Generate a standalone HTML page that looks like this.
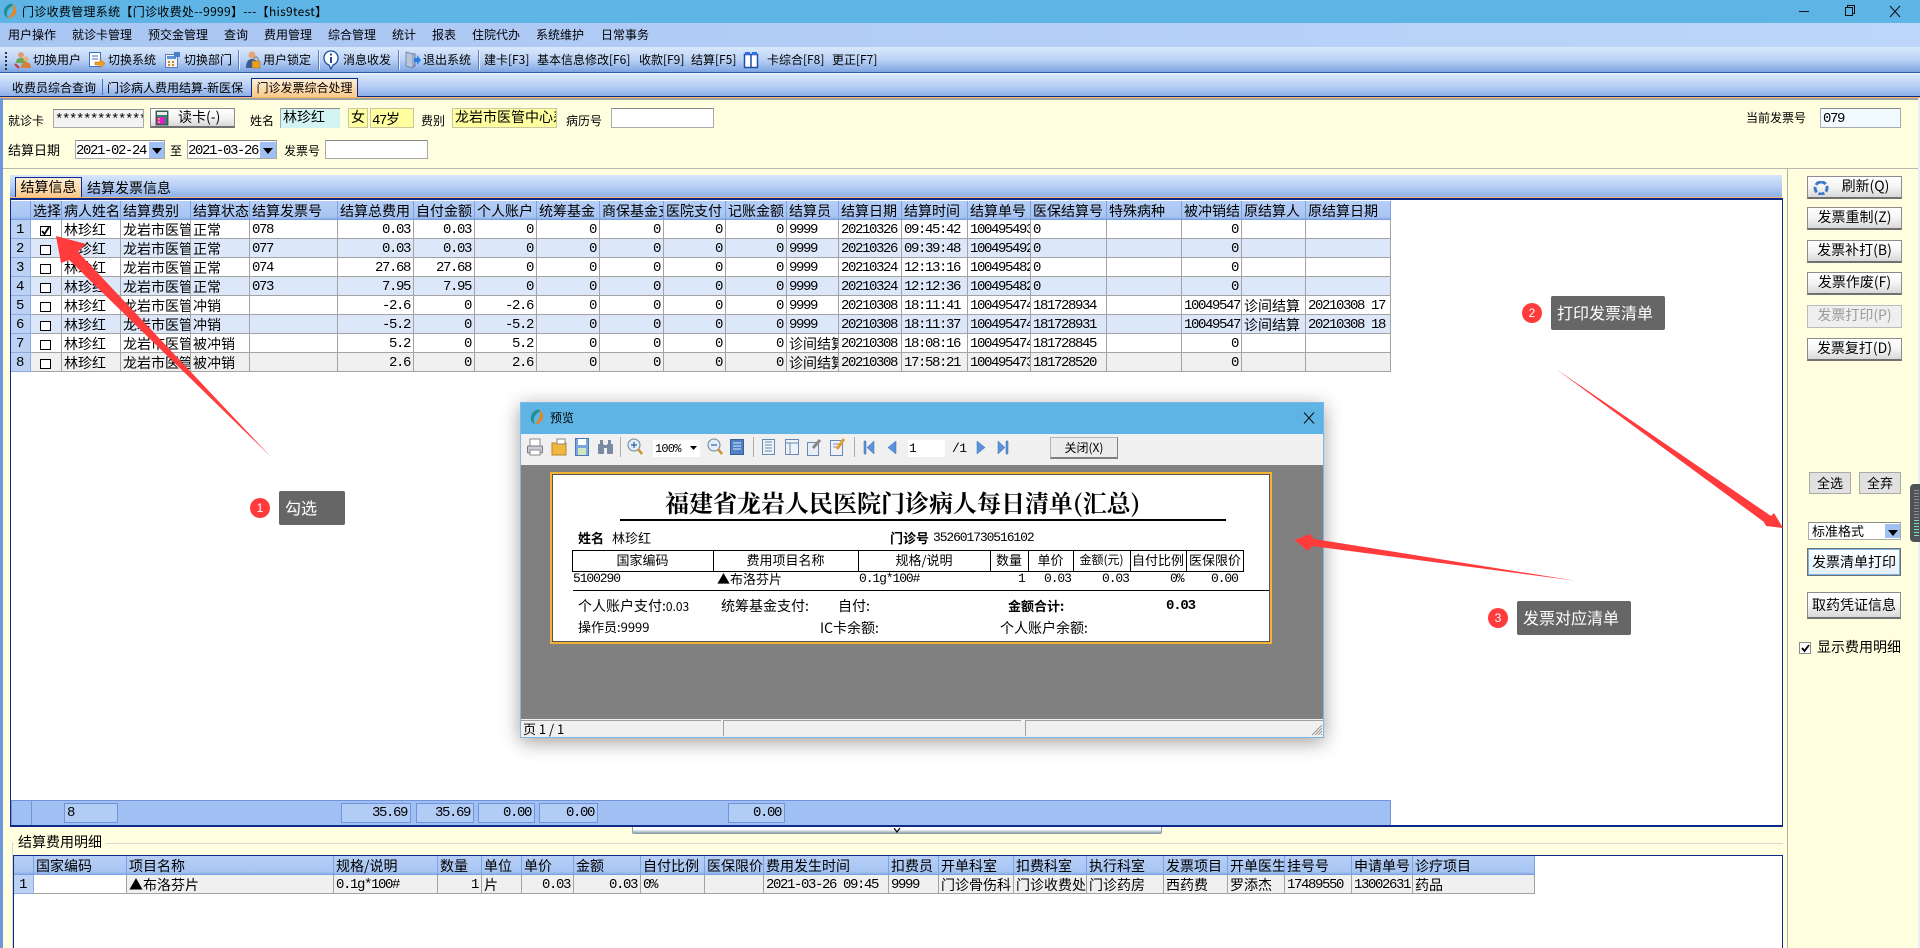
<!DOCTYPE html>
<html lang="zh"><head><meta charset="utf-8"><title>门诊收费管理系统</title>
<style>
*{box-sizing:border-box}
html,body{margin:0;padding:0;width:1920px;height:948px;overflow:hidden;background:#ffffe0}
body{position:relative;font:12px/16px "WenQuanYi Zen Hei","Noto Sans CJK SC","Liberation Sans",sans-serif;color:#000}
.a{position:absolute}
.t{position:absolute;white-space:nowrap;line-height:16px}
.f14{font-size:14px}
.mono{font-family:"Liberation Mono","WenQuanYi Zen Hei",monospace;font-size:14px;letter-spacing:-1.4px}
.rm{font-family:"Liberation Mono",monospace;font-size:13px;letter-spacing:-1.1px}
.inp{position:absolute;border:1px solid #a9a9a9;border-top-color:#8a8a8a;background:#fff;overflow:hidden;white-space:nowrap;font-size:14px;line-height:17px;padding-left:2px}
.inp.mono{line-height:20px}
.btn{position:absolute;background:linear-gradient(#fff,#f4f4f4 50%,#d8d8d8);border:1px solid #8c8c8c;border-bottom:2px solid #707070;font-size:14px;line-height:19px;text-align:center;white-space:nowrap}
.arr{position:absolute;background:#a0bff3}
.arr:after{content:"";position:absolute;left:3px;top:6px;border:5px solid transparent;border-top:6px solid #000}
table{position:absolute;border-collapse:separate;border-spacing:0;table-layout:fixed}
td,th{box-sizing:border-box;height:19px;padding:2px 0 0 2px;border-right:1px solid #a3a3a3;border-bottom:1px solid #a3a3a3;overflow:hidden;white-space:nowrap;font-weight:normal;text-align:left;font-size:14px;line-height:16px}
th{background:linear-gradient(#b6cff6,#a8c5f2 85%,#8fb0ea);border-right:1px solid #7fa2e0;border-bottom:1px solid #7b9fe0}
td.i{background:#bcd2f5;border-right-color:#8fabe0;border-bottom-color:#8fabe0;font-family:"Liberation Mono",monospace;font-size:14px;letter-spacing:-1.4px;padding-left:5px}
td.m,td.r{font-family:"Liberation Mono",monospace;letter-spacing:-1.4px}
td.r{text-align:right;padding:2px 3px 0 0}
tr.e td{background:#dce8fa}
tr.e td.i,tr.g td.i{background:#bcd2f5}
tr.g td{background:#f0f0f0}
.c{display:block;width:11px;height:10px;border:1px solid #000;background:#fff;margin:1px 0 0 7px;position:relative}
.c svg{position:absolute;left:0;top:-1px}
.sm{position:absolute;border:1px solid #7292d9;background:#b2cdf5;height:20px;top:803px;font-family:"Liberation Mono",monospace;font-size:14px;letter-spacing:-1.4px;line-height:18px;text-align:right;padding-right:3px}
.b{font-weight:bold}
</style></head><body>

<!-- title bar -->
<div class="a" style="left:0;top:0;width:1920px;height:23px;background:#5db4e5"></div>
<svg class="a" style="left:2px;top:3px" width="16" height="16" viewBox="0 0 16 16"><path d="M10 .5C5 1 1.500 5 2 10c.2 2 1.500 4 4 5.500C3.500 11 5 5 11 2.500z" fill="#1f8f8f"/><path d="M5.500 15.500C11 15 15 11 14 6c-.4-2-1.500-4-3.500-5 2 4.500 0 10-5 14.500z" fill="#e9851c"/></svg>
<div class="t" style="left:22px;top:4px;letter-spacing:.3px">门诊收费管理系统【门诊收费处--9999】---【his9test】</div>
<svg class="a" style="left:1795px;top:3px" width="120" height="16" viewBox="0 0 120 16" fill="none" stroke="#111"><path d="M4 8.500h10"/><path d="M50.500 4.500h7v8h-7zM52.500 4.500v-2h7v8h-2"/><path d="M95 3l10 11M105 3L95 14"/></svg>

<!-- menu -->
<div class="a" style="left:0;top:23px;width:1920px;height:24px;background:linear-gradient(90deg,#a9c5f2,#bdd6fa)"></div>
<div class="t" style="left:8px;top:27px">用户操作</div>
<div class="t" style="left:72px;top:27px">就诊卡管理</div>
<div class="t" style="left:148px;top:27px">预交金管理</div>
<div class="t" style="left:224px;top:27px">查询</div>
<div class="t" style="left:264px;top:27px">费用管理</div>
<div class="t" style="left:328px;top:27px">综合管理</div>
<div class="t" style="left:392px;top:27px">统计</div>
<div class="t" style="left:432px;top:27px">报表</div>
<div class="t" style="left:472px;top:27px">住院代办</div>
<div class="t" style="left:536px;top:27px">系统维护</div>
<div class="t" style="left:601px;top:27px">日常事务</div>

<!-- toolbar -->
<div class="a" style="left:0;top:47px;width:1920px;height:26px;background:linear-gradient(#d9e9fc,#bcd3f6 50%,#7fa5e2);border-bottom:1px solid #2f5fa8"></div>
<div class="a" style="left:5px;top:52px;width:2px;height:18px;background:repeating-linear-gradient(#234 0 2px,transparent 2px 4px)"></div>
<svg class="a" style="left:14px;top:50px" width="18" height="20" viewBox="0 0 18 20"><circle cx="7" cy="5" r="3" fill="#e0a070"/><path d="M2 13c0-4 2-5 5-5s5 1 5 5z" fill="#6aa84f"/><circle cx="12" cy="9" r="2.500" fill="#e9b27a"/><path d="M7 18c0-4 2-6 5-6s5 2 5 6z" fill="#d6803c"/><path d="M1 14l4 4" stroke="#c33" stroke-width="2"/></svg>
<div class="t" style="left:33px;top:52px">切换用户</div>
<svg class="a" style="left:88px;top:51px" width="18" height="18" viewBox="0 0 18 18"><rect x="1.500" y="1.500" width="11" height="14" fill="#fff" stroke="#3b6fc0"/><path d="M4 5h6M4 8h6" stroke="#3b6fc0"/><path d="M7 11h5V8l5 4.500L12 17v-3H7z" fill="#f0a020" stroke="#b06a10" stroke-width=".5"/></svg>
<div class="t" style="left:108px;top:52px">切换系统</div>
<svg class="a" style="left:164px;top:51px" width="17" height="18" viewBox="0 0 17 18"><rect x="1.500" y="3.500" width="12" height="13" fill="#f4f4f4" stroke="#5a7fb8"/><rect x="3" y="5" width="9" height="3" fill="#5f95d8"/><path d="M4 10h2v2H4zM8 10h2v2H8zM4 13h2v2H4zM8 13h2v2H8z" fill="#d9822b"/><rect x="10" y="1" width="6" height="5" fill="#4a7fcc"/></svg>
<div class="t" style="left:184px;top:52px">切换部门</div>
<div class="a" style="left:238px;top:50px;width:1px;height:20px;background:#5d7fb8;box-shadow:1px 0 #e6f0fc"></div>
<svg class="a" style="left:245px;top:50px" width="16" height="20" viewBox="0 0 16 20"><circle cx="7" cy="5" r="3.500" fill="#e4a878"/><path d="M1 18c0-6 2-9 6-9s6 3 6 9z" fill="#3a5b94"/><rect x="7" y="11" width="8" height="7" fill="#e8a020" stroke="#96650f" stroke-width=".5"/><path d="M9 11V9a2 2 0 014 0v2" fill="none" stroke="#777"/></svg>
<div class="t" style="left:263px;top:52px">用户锁定</div>
<div class="a" style="left:318px;top:50px;width:1px;height:20px;background:#5d7fb8;box-shadow:1px 0 #e6f0fc"></div>
<svg class="a" style="left:323px;top:50px" width="16" height="20" viewBox="0 0 16 20"><path d="M8 1c4 0 7 3 7 7s-3 6.500-5 7l-2 4-2-4c-2-.5-5-3-5-7s3-7 7-7z" fill="#fff" stroke="#1f4f9c" stroke-width="1.300"/><rect x="7" y="3.500" width="2" height="2" fill="#1f4f9c"/><rect x="7" y="7" width="2" height="6" fill="#1f4f9c"/></svg>
<div class="t" style="left:343px;top:52px">消息收发</div>
<div class="a" style="left:398px;top:50px;width:1px;height:20px;background:#5d7fb8;box-shadow:1px 0 #e6f0fc"></div>
<svg class="a" style="left:404px;top:50px" width="17" height="20" viewBox="0 0 17 20"><path d="M2 2l7 2v14l-7-2z" fill="#b8c6dc" stroke="#5e7299" stroke-width=".7"/><path d="M9 4h2v12H9" fill="none" stroke="#5e7299"/><path d="M10 8h3V5l4 5-4 5v-3h-3z" fill="#2c7fe0"/></svg>
<div class="t" style="left:423px;top:52px">退出系统</div>
<div class="a" style="left:478px;top:50px;width:1px;height:20px;background:#5d7fb8;box-shadow:1px 0 #e6f0fc"></div>
<div class="t" style="left:484px;top:52px">建卡[F3]</div>
<div class="t" style="left:537px;top:52px">基本信息修改[F6]</div>
<div class="t" style="left:639px;top:52px">收款[F9]</div>
<div class="t" style="left:691px;top:52px">结算[F5]</div>
<svg class="a" style="left:743px;top:51px" width="16" height="18" viewBox="0 0 16 18"><rect x="1.500" y="3.500" width="13" height="13" fill="#fff" stroke="#1c4fb0" stroke-width="1.500"/><path d="M8 3v14" stroke="#1c4fb0" stroke-width="1.500"/><rect x="2" y="1" width="5" height="3" fill="#2f6fe0"/><rect x="9" y="1" width="5" height="3" fill="#2f6fe0"/></svg>
<div class="t" style="left:767px;top:52px">卡综合[F8]</div>
<div class="t" style="left:832px;top:52px">更正[F7]</div>

<!-- tab bar -->
<div class="a" style="left:0;top:73px;width:1920px;height:2px;background:#e6effb"></div>
<div class="a" style="left:0;top:75px;width:1920px;height:21px;background:linear-gradient(#d6e6fb,#b9d0f5 50%,#8eb0e8)"></div>
<div class="a" style="left:0;top:96px;width:1920px;height:1px;background:#0d2a8a"></div>
<div class="a" style="left:0;top:97px;width:1920px;height:1px;background:#fdb868"></div>
<div class="t" style="left:12px;top:80px">收费员综合查询</div>
<div class="a" style="left:102px;top:79px;width:1px;height:16px;background:#4a6fae"></div>
<div class="t" style="left:107px;top:80px">门诊病人费用结算-新医保</div>
<div class="a" style="left:251px;top:78px;width:107px;height:19px;background:linear-gradient(#fdeed6,#fbc98a);border:1px solid #0d2a8a;border-bottom:0;text-align:center;line-height:18px">门诊发票综合处理</div>

<!-- form panel -->
<div class="a" style="left:0;top:98px;width:3px;height:850px;background:#6f97dc"></div>
<div class="a" style="left:3px;top:98px;width:1915px;height:2px;background:#a0a0a0"></div>
<div class="a" style="left:3px;top:168px;width:1915px;height:1px;background:#b8b8b0"></div>
<div class="a" style="left:1918px;top:98px;width:2px;height:850px;background:#e8eef8"></div>

<div class="t" style="left:8px;top:113px">就诊卡</div>
<div class="inp mono" style="left:53px;top:109px;width:91px;height:19px;background:#f2f2f2;padding-left:1px;line-height:21px">*************</div>
<div class="btn" style="left:150px;top:108px;width:85px;height:20px;line-height:17px;text-align:left;padding-left:27px">读卡(-)</div>
<svg class="a" style="left:155px;top:110px" width="14" height="16" viewBox="0 0 14 16"><rect x="1" y="1" width="12" height="14" fill="#2b8a6a" stroke="#222" stroke-width=".7"/><rect x="2" y="2" width="10" height="3" fill="#eee"/><rect x="2" y="7" width="8" height="7" fill="#e020c0"/><path d="M3 9h2M3 12h2" stroke="#ff0"/></svg>
<div class="t" style="left:250px;top:113px">姓名</div>
<div class="inp" style="left:280px;top:108px;width:60px;height:20px;background:#d4f4f4;border-width:1px 0 0 1px">林珍红</div>
<div class="inp" style="left:348px;top:108px;width:20px;height:20px;background:#ffffa0;border-color:#c8c8a0">女</div>
<div class="inp mono" style="left:370px;top:108px;width:44px;height:20px;background:#ffffa0;border-color:#c8c8a0;padding-left:1px">47<span style="font-family:'WenQuanYi Zen Hei',sans-serif;letter-spacing:0">岁</span></div>
<div class="t" style="left:421px;top:113px">费别</div>
<div class="inp" style="left:452px;top:108px;width:105px;height:20px;background:#ffffa0;border-color:#c8c8a0">龙岩市医管中心差额</div>
<div class="t" style="left:566px;top:113px">病历号</div>
<div class="inp" style="left:611px;top:108px;width:103px;height:20px"></div>
<div class="t" style="left:1746px;top:110px">当前发票号</div>
<div class="inp mono" style="left:1820px;top:108px;width:81px;height:20px;background:#f0faff">079</div>

<div class="t" style="left:8px;top:142px;font-size:13px">结算日期</div>
<div class="inp mono" style="left:75px;top:140px;width:90px;height:19px;padding-left:0">2021-02-24</div>
<div class="arr" style="left:149px;top:142px;width:15px;height:16px"></div>
<div class="t" style="left:170px;top:143px">至</div>
<div class="inp mono" style="left:187px;top:140px;width:90px;height:19px;padding-left:0">2021-03-26</div>
<div class="arr" style="left:260px;top:142px;width:16px;height:16px"></div>
<div class="t" style="left:284px;top:143px">发票号</div>
<div class="inp" style="left:325px;top:140px;width:103px;height:19px"></div>

<!-- inner tabs -->
<div class="a" style="left:10px;top:175px;width:1772px;height:22px;background:linear-gradient(#d6e6fb,#b9d0f5 50%,#8eb0e8)"></div>
<div class="a" style="left:15px;top:177px;width:67px;height:20px;background:linear-gradient(#fdeed6,#fbc98a);border:1px solid #0d2a8a;border-bottom:0;text-align:center;font-size:14px;line-height:18px">结算信息</div>
<div class="t f14" style="left:87px;top:180px">结算发票信息</div>
<div class="a" style="left:10px;top:197px;width:1772px;height:1px;background:#fdb868"></div>

<!-- main grid -->
<div class="a" style="left:10px;top:198px;width:1773px;height:629px;background:#fff;border:1px solid #0d2a8a;border-width:2px 1px"></div>
<table style="left:11px;top:201px;width:1380px">
<colgroup><col width="20"><col width="31"><col width="59"><col width="70"><col width="59"><col width="88"><col width="76"><col width="61"><col width="62"><col width="63"><col width="64"><col width="62"><col width="61"><col width="52"><col width="63"><col width="66"><col width="63"><col width="76"><col width="75"><col width="60"><col width="64"><col width="85"></colgroup>
<tr><th></th><th>选择</th><th>病人姓名</th><th>结算费别</th><th>结算状态</th><th>结算发票号</th><th>结算总费用</th><th>自付金额</th><th>个人账户</th><th>统筹基金</th><th>商保基金支付</th><th>医院支付</th><th>记账金额</th><th>结算员</th><th>结算日期</th><th>结算时间</th><th>结算单号</th><th>医保结算号</th><th>特殊病种</th><th>被冲销结</th><th>原结算人</th><th>原结算日期</th></tr>
<tr><td class="i">1</td><td><i class="c"><svg width="9" height="10" viewBox="0 0 9 10"><path d="M1 5l2.500 3L8 1" fill="none" stroke="#000" stroke-width="1.800"/></svg></i></td><td>林珍红</td><td>龙岩市医管中心差额</td><td>正常</td><td class="m">078</td><td class="r">0.03</td><td class="r">0.03</td><td class="r">0</td><td class="r">0</td><td class="r">0</td><td class="r">0</td><td class="r">0</td><td class="m">9999</td><td class="m">20210326</td><td class="m">09:45:42</td><td class="m">1004954932</td><td class="m">0</td><td></td><td class="r">0</td><td></td><td></td></tr>
<tr class="e"><td class="i">2</td><td><i class="c"></i></td><td>林珍红</td><td>龙岩市医管中心差额</td><td>正常</td><td class="m">077</td><td class="r">0.03</td><td class="r">0.03</td><td class="r">0</td><td class="r">0</td><td class="r">0</td><td class="r">0</td><td class="r">0</td><td class="m">9999</td><td class="m">20210326</td><td class="m">09:39:48</td><td class="m">1004954925</td><td class="m">0</td><td></td><td class="r">0</td><td></td><td></td></tr>
<tr><td class="i">3</td><td><i class="c"></i></td><td>林珍红</td><td>龙岩市医管中心差额</td><td>正常</td><td class="m">074</td><td class="r">27.68</td><td class="r">27.68</td><td class="r">0</td><td class="r">0</td><td class="r">0</td><td class="r">0</td><td class="r">0</td><td class="m">9999</td><td class="m">20210324</td><td class="m">12:13:16</td><td class="m">1004954825</td><td class="m">0</td><td></td><td class="r">0</td><td></td><td></td></tr>
<tr class="e"><td class="i">4</td><td><i class="c"></i></td><td>林珍红</td><td>龙岩市医管中心差额</td><td>正常</td><td class="m">073</td><td class="r">7.95</td><td class="r">7.95</td><td class="r">0</td><td class="r">0</td><td class="r">0</td><td class="r">0</td><td class="r">0</td><td class="m">9999</td><td class="m">20210324</td><td class="m">12:12:36</td><td class="m">1004954824</td><td class="m">0</td><td></td><td class="r">0</td><td></td><td></td></tr>
<tr><td class="i">5</td><td><i class="c"></i></td><td>林珍红</td><td>龙岩市医管中心差额</td><td>冲销</td><td></td><td class="r">-2.6</td><td class="r">0</td><td class="r">-2.6</td><td class="r">0</td><td class="r">0</td><td class="r">0</td><td class="r">0</td><td class="m">9999</td><td class="m">20210308</td><td class="m">18:11:41</td><td class="m">1004954741</td><td class="m">181728934</td><td></td><td class="m">10049547</td><td>诊间结算</td><td class="m">20210308 17</td></tr>
<tr class="e"><td class="i">6</td><td><i class="c"></i></td><td>林珍红</td><td>龙岩市医管中心差额</td><td>冲销</td><td></td><td class="r">-5.2</td><td class="r">0</td><td class="r">-5.2</td><td class="r">0</td><td class="r">0</td><td class="r">0</td><td class="r">0</td><td class="m">9999</td><td class="m">20210308</td><td class="m">18:11:37</td><td class="m">1004954740</td><td class="m">181728931</td><td></td><td class="m">10049547</td><td>诊间结算</td><td class="m">20210308 18</td></tr>
<tr><td class="i">7</td><td><i class="c"></i></td><td>林珍红</td><td>龙岩市医管中心差额</td><td>被冲销</td><td></td><td class="r">5.2</td><td class="r">0</td><td class="r">5.2</td><td class="r">0</td><td class="r">0</td><td class="r">0</td><td class="r">0</td><td>诊间结算</td><td class="m">20210308</td><td class="m">18:08:16</td><td class="m">1004954742</td><td class="m">181728845</td><td></td><td class="r">0</td><td></td><td></td></tr>
<tr class="g"><td class="i">8</td><td><i class="c"></i></td><td>林珍红</td><td>龙岩市医管中心差额</td><td>被冲销</td><td></td><td class="r">2.6</td><td class="r">0</td><td class="r">2.6</td><td class="r">0</td><td class="r">0</td><td class="r">0</td><td class="r">0</td><td>诊间结算</td><td class="m">20210308</td><td class="m">17:58:21</td><td class="m">1004954739</td><td class="m">181728520</td><td></td><td class="r">0</td><td></td><td></td></tr>
</table>
<!-- grid footer -->
<div class="a" style="left:11px;top:800px;width:1380px;height:25px;background:#a0bff3;border:1px solid #7292d9;border-bottom:0"></div>
<div class="a" style="left:31px;top:800px;width:1px;height:25px;background:#7292d9"></div>
<div class="sm" style="left:64px;width:54px;text-align:left;padding-left:2px">8</div>
<div class="sm" style="left:341px;width:70px">35.69</div>
<div class="sm" style="left:416px;width:58px">35.69</div>
<div class="sm" style="left:478px;width:57px">0.00</div>
<div class="sm" style="left:539px;width:59px">0.00</div>
<div class="sm" style="left:728px;width:57px">0.00</div>

<!-- splitter -->
<div class="a" style="left:632px;top:827px;width:530px;height:7px;background:linear-gradient(#fff 40%,#8fa6b4);border:1px solid #8c9eaa;border-top:0;border-radius:0 0 2px 2px"></div>
<svg class="a" style="left:893px;top:828px" width="8" height="5" viewBox="0 0 8 5"><path d="M1 0l3 4 3-4" fill="none" stroke="#000" stroke-width="1.200"/></svg>

<!-- detail -->
<div class="a" style="left:12px;top:843px;width:1771px;height:1px;background:#d8d8d0"></div>
<div class="a" style="left:12px;top:843px;width:1px;height:105px;background:#d8d8d0"></div>
<div class="t f14" style="left:14px;top:834px;background:#ffffe0;padding:0 4px">结算费用明细</div>
<div class="a" style="left:13px;top:855px;width:1770px;height:93px;background:#fff;border:1px solid #0d2a8a;border-bottom:0"></div>
<table style="left:14px;top:856px;width:1521px">
<colgroup><col width="20"><col width="93"><col width="207"><col width="104"><col width="44"><col width="40"><col width="52"><col width="67"><col width="64"><col width="59"><col width="125"><col width="50"><col width="75"><col width="73"><col width="77"><col width="64"><col width="57"><col width="67"><col width="61"><col width="122"></colgroup>
<tr><th></th><th>国家编码</th><th>项目名称</th><th>规格/说明</th><th>数量</th><th>单位</th><th>单价</th><th>金额</th><th>自付比例</th><th>医保限价</th><th>费用发生时间</th><th>扣费员</th><th>开单科室</th><th>扣费科室</th><th>执行科室</th><th>发票项目</th><th>开单医生</th><th>挂号号</th><th>申请单号</th><th>诊疗项目</th></tr>
<tr class="g"><td class="i">1</td><td style="background:#fff"></td><td>▲布洛芬片</td><td class="m">0.1g*100#</td><td class="r">1</td><td>片</td><td class="r">0.03</td><td class="r">0.03</td><td class="m">0%</td><td></td><td class="m">2021-03-26 09:45</td><td class="m">9999</td><td>门诊骨伤科</td><td>门诊收费处</td><td>门诊药房</td><td>西药费</td><td>罗添杰</td><td class="m">17489550</td><td class="m">13002631</td><td>药品</td></tr>
</table>

<!-- right panel -->
<div class="a" style="left:1787px;top:169px;width:1px;height:779px;background:#b0b0a8"></div>
<div class="btn" style="left:1807px;top:176px;width:95px;height:23px;padding-left:22px">刷新(Q)</div>
<svg class="a" style="left:1813px;top:181px" width="16" height="14" viewBox="0 0 16 14"><path d="M8 1a6 6 0 10.100 0" fill="none" stroke="#3f78c8" stroke-width="3" stroke-dasharray="6 2"/></svg>
<div class="btn" style="left:1807px;top:207px;width:95px;height:23px">发票重制(Z)</div>
<div class="btn" style="left:1807px;top:240px;width:95px;height:23px">发票补打(B)</div>
<div class="btn" style="left:1807px;top:272px;width:95px;height:23px">发票作废(F)</div>
<div class="btn" style="left:1807px;top:305px;width:95px;height:23px;border:1px solid #bbb;background:#efefef;color:#9a9a9a">发票打印(P)</div>
<div class="btn" style="left:1807px;top:338px;width:95px;height:23px">发票复打(D)</div>
<div class="a" style="left:1809px;top:472px;width:42px;height:22px;background:#e1e1e1;border:1px solid #aaa;text-align:center;line-height:20px;font-size:13px">全选</div>
<div class="a" style="left:1859px;top:472px;width:42px;height:22px;background:#e1e1e1;border:1px solid #aaa;text-align:center;line-height:20px;font-size:13px">全弃</div>
<div class="inp" style="left:1808px;top:522px;width:93px;height:18px;font-size:13px;line-height:16px;padding-left:3px">标准格式</div>
<div class="arr" style="left:1885px;top:524px;width:15px;height:14px"></div>
<div class="btn" style="left:1807px;top:548px;width:94px;height:28px;line-height:24px;background:linear-gradient(#fff,#e4effa);border:2px solid #7ab6ea;outline:1px solid #707070;outline-offset:-1px">发票清单打印</div>
<div class="btn" style="left:1807px;top:592px;width:94px;height:27px;line-height:24px">取药凭证信息</div>
<div class="a" style="left:1799px;top:642px;width:12px;height:12px;background:#fff;border:1px solid #8a8a8a"><svg class="a" style="left:1px;top:1px" width="9" height="9" viewBox="0 0 9 9"><path d="M1 4l2.500 3L8 1" fill="none" stroke="#000" stroke-width="1.800"/></svg></div>
<div class="t f14" style="left:1817px;top:639px">显示费用明细</div>
<div class="a" style="left:1910px;top:484px;width:10px;height:58px;background:#4e5358;border-radius:4px 0 0 4px"></div>
<div class="a" style="left:1914px;top:490px;width:5px;height:30px;background:repeating-linear-gradient(#8a9096 0 1px,transparent 1px 3px)"></div>
<div class="a" style="left:1914px;top:520px;width:5px;height:16px;background:repeating-linear-gradient(#7fe0c0 0 1px,transparent 1px 3px)"></div>

<!-- preview dialog -->
<div class="a" style="left:520px;top:402px;width:804px;height:336px;background:#808080;border:1px solid #7db8e4;box-shadow:0 4px 18px rgba(0,0,0,.38)">
  <div class="a" style="left:0;top:0;width:802px;height:31px;background:#5db4e5"></div>
  <div class="a" style="left:0;top:31px;width:802px;height:31px;background:#f0f0f0"></div>
  <div class="a" style="left:0;top:316px;width:802px;height:18px;background:#f0f0f0"></div>
</div>
<svg class="a" style="left:529px;top:409px" width="16" height="16" viewBox="0 0 16 16"><path d="M10 .5C5 1 1.500 5 2 10c.2 2 1.500 4 4 5.500C3.500 11 5 5 11 2.500z" fill="#1f8f8f"/><path d="M5.500 15.500C11 15 15 11 14 6c-.4-2-1.500-4-3.500-5 2 4.500 0 10-5 14.500z" fill="#e9851c"/></svg>
<div class="t" style="left:550px;top:410px">预览</div>
<svg class="a" style="left:1303px;top:411px" width="12" height="14" viewBox="0 0 12 14" fill="none" stroke="#111"><path d="M1 1.500l10 11M11 1.500l-10 11"/></svg>
<!-- preview toolbar -->
<svg class="a" style="left:526px;top:437px" width="600" height="20" viewBox="0 0 600 20">
<g transform="translate(1,1)"><rect x="3" y="1" width="10" height="7" fill="#fff" stroke="#888"/><rect x="0.500" y="8" width="15" height="7" rx="1" fill="#c8ced4" stroke="#778"/><rect x="3" y="12" width="10" height="5" fill="#fff" stroke="#888"/></g>
<g transform="translate(25,1)"><path d="M1 5h14v12H1z" fill="#f0b840" stroke="#b88420"/><path d="M6 1h8v5H6z" fill="#fff" stroke="#888"/></g>
<g transform="translate(49,1)"><rect x="0.500" y="0.500" width="13" height="17" fill="#7aa6e0" stroke="#4a78b8"/><rect x="3" y="1" width="8" height="6" fill="#fff"/><rect x="3" y="10" width="8" height="7" fill="#cfe6c0"/></g>
<g transform="translate(72,2)" fill="#7a8aa4"><rect x="0" y="5" width="6" height="10" rx="1"/><rect x="9" y="5" width="6" height="10" rx="1"/><rect x="2" y="1" width="3" height="6"/><rect x="10" y="1" width="3" height="6"/><rect x="5" y="6" width="5" height="3"/></g>
<path d="M94.500 0v20M227.500 0v20M328.500 0v20" stroke="#aaa"/>
<g transform="translate(101,1)"><circle cx="7" cy="7" r="6" fill="#e4eef8" stroke="#6a84a0"/><path d="M4 7h6M7 4v6" stroke="#2c5ea8" stroke-width="1.200"/><path d="M11 11l4 5" stroke="#c8922c" stroke-width="2.500"/></g>
<g transform="translate(181,1)"><circle cx="7" cy="7" r="6" fill="#e4eef8" stroke="#6a84a0"/><path d="M4 7h6" stroke="#2c5ea8" stroke-width="1.200"/><path d="M11 11l4 5" stroke="#c8922c" stroke-width="2.500"/></g>
<g transform="translate(204,2)"><rect x="0.500" y="0.500" width="13" height="15" fill="#4f80c8" stroke="#3a5f98"/><path d="M3 4h8M3 7h8M3 10h8" stroke="#dfe8f6"/></g>
<g transform="translate(236,2)"><rect x="0.500" y="0.500" width="12" height="15" fill="#eef2f8" stroke="#6a88b4"/><path d="M3 3h7M3 6h7M3 9h7M3 12h7" stroke="#6a88b4"/></g>
<g transform="translate(259,2)"><rect x="0.500" y="0.500" width="13" height="15" fill="#eef2f8" stroke="#6a88b4"/><path d="M1 4h12M5 4v11" stroke="#6a88b4"/></g>
<g transform="translate(281,2)"><rect x="0.500" y="3.500" width="11" height="13" fill="#e8eef8" stroke="#6a88b4"/><path d="M13 1l-7 8" stroke="#888" stroke-width="3"/></g>
<g transform="translate(304,1)"><rect x="0.500" y="2.500" width="12" height="15" fill="#eef2f8" stroke="#6a88b4"/><path d="M3 6h6M3 9h6" stroke="#88a"/><path d="M14 1L7 11" stroke="#e0a030" stroke-width="3"/></g>
<g fill="#5a92dc" stroke="#3a6cb4" stroke-width=".5"><path d="M338 4h2v13h-2zM348 4v13l-7-6.500z"/><path d="M370 4v13l-8-6.500z"/><path d="M451 4l8 6.500-8 6.500z"/><path d="M472 4l7 6.500-7 6.500zM480 4h2v13h-2z"/></g>
</svg>
<div class="a" style="left:653px;top:440px;width:47px;height:17px;background:#fff"></div>
<div class="t mono" style="left:655px;top:441px;font-size:12px;letter-spacing:-.8px">100%</div>
<svg class="a" style="left:690px;top:446px" width="7" height="4" viewBox="0 0 7 4"><path d="M0 0h7L3.500 4z"/></svg>
<div class="a" style="left:908px;top:440px;width:37px;height:17px;background:#fff"></div>
<div class="t mono" style="left:909px;top:441px;font-size:13px;letter-spacing:0">1</div>
<div class="t mono" style="left:952px;top:441px;font-size:13px;letter-spacing:-.6px">/1</div>
<div class="a" style="left:1050px;top:437px;width:68px;height:22px;background:#ececec;border:1px solid #b4b4b4;border-bottom:2px solid #808080;border-right-color:#808080;text-align:center;line-height:19px">关闭(X)</div>

<!-- report page -->
<div class="a" style="left:550px;top:472px;width:722px;height:172px;background:#fff;border:2px solid #f2b233;outline:1px solid #555;outline-offset:-3px"></div>
<div class="t" style="left:665px;top:486px;font:bold 24px/32px 'Noto Serif CJK SC','Liberation Serif',serif">福建省龙岩人民医院门诊病人每日清单(汇总)</div>
<div class="a" style="left:620px;top:519px;width:606px;height:2px;background:#000"></div>
<div class="t b" style="left:578px;top:530px;font-size:13px">姓名</div>
<div class="t" style="left:612px;top:530px;font-size:13px">林珍红</div>
<div class="t b" style="left:890px;top:530px;font-size:13px">门诊号</div>
<div class="t rm" style="left:933px;top:530px">352601730516102</div>
<div class="a" style="left:572px;top:550px;width:672px;height:22px;border:1px solid #000"></div>
<div class="a" style="left:713px;top:550px;width:1px;height:22px;background:#000"></div>
<div class="a" style="left:858px;top:550px;width:1px;height:22px;background:#000"></div>
<div class="a" style="left:990px;top:550px;width:1px;height:22px;background:#000"></div>
<div class="a" style="left:1028px;top:550px;width:1px;height:22px;background:#000"></div>
<div class="a" style="left:1073px;top:550px;width:1px;height:22px;background:#000"></div>
<div class="a" style="left:1130px;top:550px;width:1px;height:22px;background:#000"></div>
<div class="a" style="left:1186px;top:550px;width:1px;height:22px;background:#000"></div>
<div class="t" style="left:572px;width:141px;text-align:center;top:552px;font-size:13px">国家编码</div>
<div class="t" style="left:713px;width:145px;text-align:center;top:552px;font-size:13px">费用项目名称</div>
<div class="t" style="left:858px;width:132px;text-align:center;top:552px;font-size:13px">规格/说明</div>
<div class="t" style="left:990px;width:38px;text-align:center;top:552px;font-size:13px">数量</div>
<div class="t" style="left:1028px;width:45px;text-align:center;top:552px;font-size:13px">单价</div>
<div class="t" style="left:1073px;width:57px;text-align:center;top:552px;font-size:12px">金额(元)</div>
<div class="t" style="left:1130px;width:56px;text-align:center;top:552px;font-size:13px">自付比例</div>
<div class="t" style="left:1186px;width:58px;text-align:center;top:552px;font-size:13px">医保限价</div>
<div class="t rm" style="left:573px;top:571px">5100290</div>
<div class="t" style="left:717px;top:571px;font-size:13px">▲布洛芬片</div>
<div class="t rm" style="left:859px;top:571px">0.1g*100#</div>
<div class="t rm" style="left:1018px;top:571px">1</div>
<div class="t rm" style="left:1044px;top:571px">0.03</div>
<div class="t rm" style="left:1102px;top:571px">0.03</div>
<div class="t rm" style="left:1170px;top:571px">0%</div>
<div class="t rm" style="left:1211px;top:571px">0.00</div>
<div class="a" style="left:573px;top:590px;width:696px;height:1px;background:#000"></div>
<div class="t f14" style="left:578px;top:598px">个人账户支付:<span style="font-size:12px">0.03</span></div>
<div class="t f14" style="left:721px;top:598px">统筹基金支付:</div>
<div class="t f14" style="left:838px;top:598px">自付:</div>
<div class="t b" style="left:1008px;top:598px;font-size:13px">金额合计:</div>
<div class="t mono b" style="left:1166px;top:598px;letter-spacing:-1.2px">0.03</div>
<div class="t" style="left:578px;top:619px;font-size:13px">操作员:9999</div>
<div class="t f14" style="left:820px;top:620px">IC卡余额:</div>
<div class="t f14" style="left:1000px;top:620px">个人账户余额:</div>

<!-- status bar -->
<div class="a" style="left:521px;top:720px;width:200px;height:16px;border-top:1px solid #a0a0a0"></div>
<div class="a" style="left:723px;top:720px;width:298px;height:16px;border:1px solid #a0a0a0;border-width:1px 0 0 1px"></div>
<div class="a" style="left:1025px;top:720px;width:298px;height:16px;border:1px solid #a0a0a0;border-width:1px 0 0 1px"></div>
<div class="t" style="left:523px;top:721px;font-size:13px">页 1 / 1</div>
<svg class="a" style="left:1311px;top:724px" width="12" height="12" viewBox="0 0 12 12" stroke="#999"><path d="M11 1L1 11M11 4l-7 7M11 7l-4 4M11 10l-1 1"/></svg>

<!-- annotation arrows -->
<svg class="a" style="left:0;top:0;pointer-events:none" width="1920" height="948" viewBox="0 0 1920 948" fill="#ff3b3b">
<polygon points="56,236 86,244 78,252 271,457 69,260 61,263"/>
<polygon points="1556,369 1771,516 1774,513 1783,528 1766,526 1764,522"/>
<polygon points="1577,581 1314,539 1310,534 1294.500,540 1308,551 1312,546"/>
</svg>

<!-- annotation tags -->
<div class="a" style="left:250px;top:498px;width:20px;height:20px;border-radius:50%;background:#ff3b3b;color:#fff;text-align:center;font:12px/20px 'Liberation Sans',sans-serif">1</div>
<div class="a" style="left:275px;top:504px;border:4px solid transparent;border-right:4px solid #666"></div>
<div class="a" style="left:279px;top:491px;width:66px;height:34px;background:#666;border-radius:2px;color:#fff;font-size:16px;line-height:32px;padding-left:6px">勾选</div>
<div class="a" style="left:1522px;top:303px;width:20px;height:20px;border-radius:50%;background:#ff3b3b;color:#fff;text-align:center;font:12px/20px 'Liberation Sans',sans-serif">2</div>
<div class="a" style="left:1547px;top:309px;border:4px solid transparent;border-right:4px solid #666"></div>
<div class="a" style="left:1551px;top:296px;width:114px;height:34px;background:#666;border-radius:2px;color:#fff;font-size:16px;line-height:32px;padding-left:6px">打印发票清单</div>
<div class="a" style="left:1488px;top:608px;width:20px;height:20px;border-radius:50%;background:#ff3b3b;color:#fff;text-align:center;font:12px/20px 'Liberation Sans',sans-serif">3</div>
<div class="a" style="left:1513px;top:614px;border:4px solid transparent;border-right:4px solid #666"></div>
<div class="a" style="left:1517px;top:601px;width:114px;height:34px;background:#666;border-radius:2px;color:#fff;font-size:16px;line-height:32px;padding-left:6px">发票对应清单</div>
</body></html>
